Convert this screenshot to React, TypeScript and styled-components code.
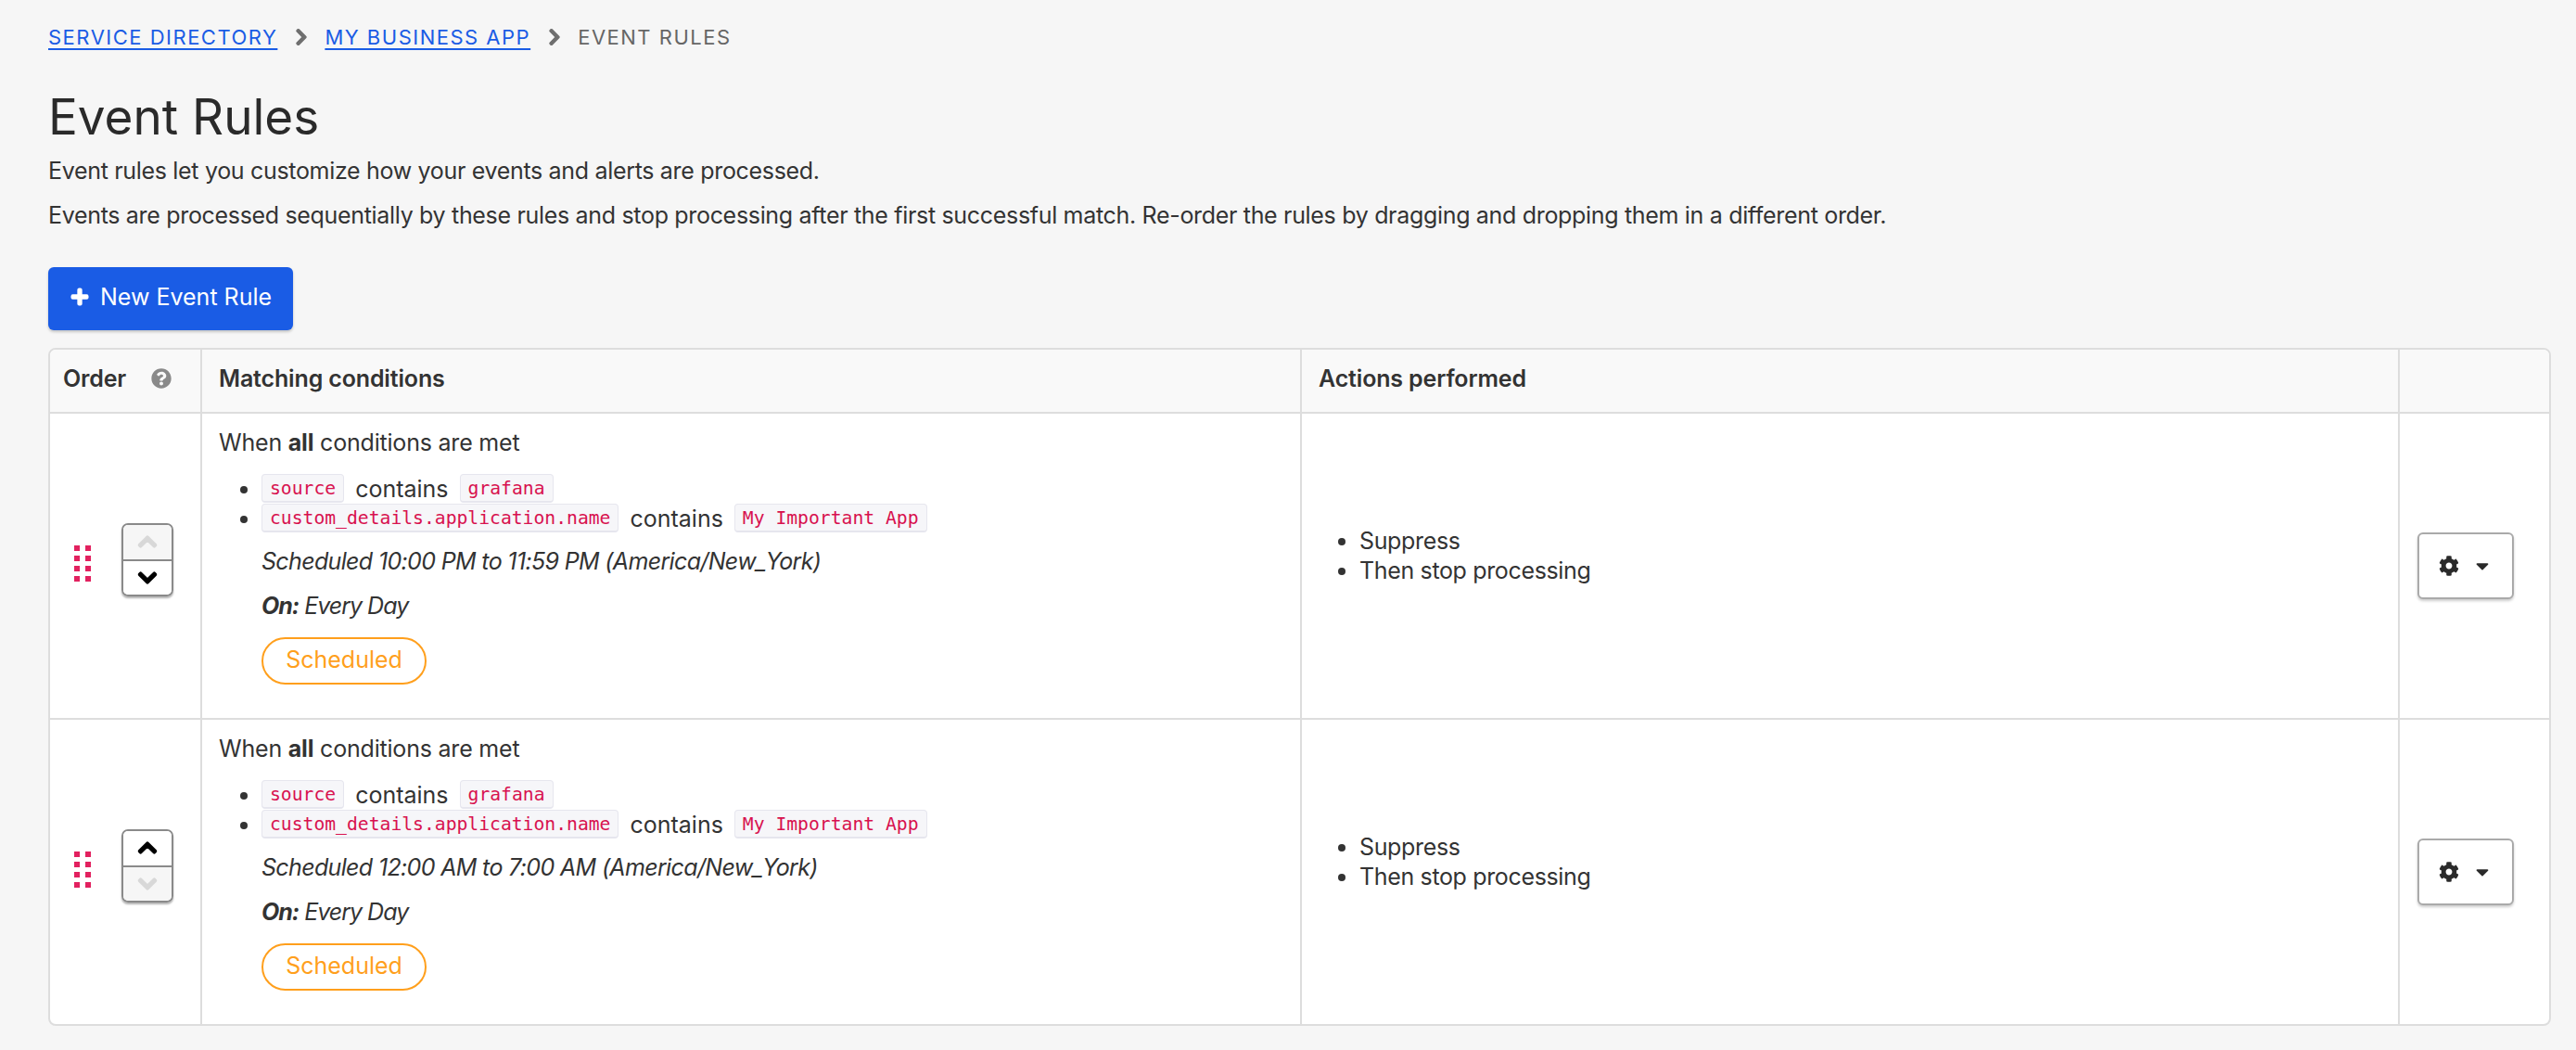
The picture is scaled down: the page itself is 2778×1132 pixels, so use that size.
import React from 'react';
import styled, { createGlobalStyle } from 'styled-components';
import { FaCaretDown, FaChevronDown, FaChevronRight, FaChevronUp, FaCog, FaPlus, FaQuestionCircle } from 'react-icons/fa';

const GlobalStyle = createGlobalStyle`
  html, body {
    margin: 0;
    background: #f6f6f6;
  }
  body {
    font-family: Inter, "Noto Sans", sans-serif;
    font-size: 25px;
    color: #333;
  }
`;

const Page = styled.div`
  width: 2778px;
  height: 1132px;
  box-sizing: border-box;
  padding: 24px 27px 0 52px;
  overflow: hidden;
`;

const Crumbs = styled.nav`
  display: flex;
  align-items: center;
  height: 32px;
  font-size: 22px;
  letter-spacing: 1.5px;
`;

const CrumbLink = styled.a`
  color: #1a5ce5;
  text-decoration: underline;
  text-underline-offset: 4px;
`;

const CrumbCurrent = styled.span`
  color: #666;
`;

const CrumbSep = styled.span`
  display: flex;
  margin: 0 15px 0 16px;
  color: #6f6f6f;
  font-size: 20px;
`;

const Title = styled.h1`
  margin: 38px 0 2px;
  font-size: 53px;
  line-height: 64px;
  font-weight: 400;
  color: #2a2a2a;
`;

const Intro = styled.p`
  margin: 0;
  height: 48px;
  line-height: 48px;
  letter-spacing: -0.32px;
`;

const NewButton = styled.button`
  display: flex;
  align-items: center;
  gap: 12px;
  margin: 32px 0 19px;
  width: 264px;
  height: 68px;
  padding: 0 0 4px 24px;
  border: 0;
  border-radius: 6px;
  background: #1a5ce5;
  color: #fff;
  font: inherit;
  box-shadow: 0 2px 3px rgba(0, 0, 0, 0.2);
`;

const Table = styled.div`
  display: grid;
  grid-template-columns: 164px 1186px 1184px 1fr;
  width: 2699px;
  box-sizing: border-box;
  border: 2px solid #ddd;
  border-radius: 8px;
  background: #fff;
  overflow: hidden;
`;

const HeadCell = styled.div<{ $last?: boolean }>`
  display: flex;
  align-items: center;
  height: 69px;
  padding: 0 18px 5px;
  box-sizing: border-box;
  background: #f9f9f9;
  border-bottom: 2px solid #ddd;
  border-right: ${(p) => (p.$last ? 0 : '2px solid #ddd')};
  font-weight: 600;
  letter-spacing: -0.15px;
`;

const OrderHead = styled(HeadCell)`
  gap: 27px;
  padding-left: 14px;
`;

const HelpIcon = styled.span`
  display: flex;
  color: #8a8a8a;
  font-size: 22px;
`;

const Cell = styled.div<{ $last?: boolean; $bottom?: boolean }>`
  height: ${(p) => (p.$bottom ? '328px' : '330px')};
  box-sizing: border-box;
  border-right: ${(p) => (p.$last ? 0 : '2px solid #ddd')};
  border-bottom: ${(p) => (p.$bottom ? 0 : '2px solid #ddd')};
`;

const OrderCell = styled(Cell)`
  display: flex;
  align-items: center;
  gap: 33px;
  padding: 0 0 6px 26px;
`;

const DragDots = styled.div`
  display: grid;
  grid-template-columns: 6px 6px;
  grid-auto-rows: 6px;
  gap: 5px 6px;
`;

const Dot = styled.i`
  background: #e2215f;
`;

const Spinner = styled.div`
  display: flex;
  flex-direction: column;
  width: 56px;
  height: 79px;
  margin-bottom: 7px;
  box-sizing: border-box;
  border: 2px solid #8a8a8a;
  border-radius: 7px;
  overflow: hidden;
  box-shadow: 0 2px 2px rgba(0, 0, 0, 0.3);
`;

const SpinnerStep = styled.div<{ $off?: boolean }>`
  flex: 1;
  display: flex;
  align-items: center;
  justify-content: center;
  background: ${(p) => (p.$off ? '#f6f6f6' : '#fff')};
  color: ${(p) => (p.$off ? '#d8d8d8' : '#000')};
  font-size: 22px;
  & + & {
    border-top: 2px solid #8a8a8a;
  }
`;

const ConditionCell = styled(Cell)`
  padding: 15px 18px 0;
`;

const Lead = styled.div`
  line-height: 32px;
  letter-spacing: -0.2px;
`;

const Conditions = styled.ul`
  margin: 18px 0 0;
  padding: 0 0 0 46px;
  line-height: 32px;
`;

const Code = styled.code`
  display: inline-block;
  box-sizing: border-box;
  height: 31px;
  padding: 0 8px;
  line-height: 30px;
  border: 1px solid #e6e6ee;
  border-bottom-width: 2px;
  border-radius: 4px;
  background: #f6f6f9;
  color: #d8124f;
  font-family: "DejaVu Sans Mono", monospace;
  font-size: 19.7px;
  vertical-align: top;
`;

const Word = styled.span`
  margin: 0 12px;
`;

const Note = styled.div`
  margin: 14px 0 0 46px;
  line-height: 32px;
  font-style: italic;
  letter-spacing: -0.65px;
`;

const DayNote = styled(Note)`
  margin-top: 16px;
  letter-spacing: -1px;
`;

const Pill = styled.div`
  display: inline-flex;
  align-items: center;
  justify-content: center;
  margin: 18px 0 0 46px;
  width: 178px;
  height: 51px;
  padding-bottom: 4px;
  box-sizing: border-box;
  border: 2px solid #ff9f1c;
  border-radius: 26px;
  color: #ff9f1c;
`;

const ActionCell = styled(Cell)`
  display: flex;
  align-items: center;
  padding-bottom: 22px;
`;

const Actions = styled.ul`
  margin: 0;
  padding: 0 0 0 62px;
  line-height: 32px;
  letter-spacing: -0.35px;
`;

const MenuCell = styled(Cell)`
  display: flex;
  align-items: center;
  justify-content: center;
  padding-right: 20px;
`;

const MenuButton = styled.button`
  display: flex;
  align-items: center;
  justify-content: center;
  gap: 14px;
  width: 104px;
  height: 72px;
  padding: 0;
  border: 2px solid #aaa;
  border-radius: 6px;
  background: #fff;
  color: #2a2a2a;
  font-size: 22px;
  box-shadow: 0 2px 3px rgba(0, 0, 0, 0.2);
`;

const rules = [
  { time: '10:00 PM to 11:59 PM', up: false, down: true },
  { time: '12:00 AM to 7:00 AM', up: true, down: false },
];

export default function App() {
  return (
    <Page>
      <GlobalStyle />
      <Crumbs>
        <CrumbLink>SERVICE DIRECTORY</CrumbLink>
        <CrumbSep><FaChevronRight strokeWidth={30} /></CrumbSep>
        <CrumbLink>MY BUSINESS APP</CrumbLink>
        <CrumbSep><FaChevronRight strokeWidth={30} /></CrumbSep>
        <CrumbCurrent>EVENT RULES</CrumbCurrent>
      </Crumbs>
      <Title>Event Rules</Title>
      <Intro>Event rules let you customize how your events and alerts are processed.</Intro>
      <Intro>Events are processed sequentially by these rules and stop processing after the first successful match. Re-order the rules by dragging and dropping them in a different order.</Intro>
      <NewButton><FaPlus size={20} strokeWidth={40} /> New Event Rule</NewButton>
      <Table>
        <OrderHead>Order <HelpIcon><FaQuestionCircle /></HelpIcon></OrderHead>
        <HeadCell>Matching conditions</HeadCell>
        <HeadCell>Actions performed</HeadCell>
        <HeadCell $last />
        {rules.map((rule, i) => {
          const isLast = i === rules.length - 1;
          return (
            <React.Fragment key={rule.time}>
              <OrderCell $bottom={isLast}>
                <DragDots>
                  {Array.from({ length: 8 }).map((_, n) => <Dot key={n} />)}
                </DragDots>
                <Spinner>
                  <SpinnerStep $off={!rule.up}><FaChevronUp strokeWidth={40} /></SpinnerStep>
                  <SpinnerStep $off={!rule.down}><FaChevronDown strokeWidth={40} /></SpinnerStep>
                </Spinner>
              </OrderCell>
              <ConditionCell $bottom={isLast}>
                <Lead>When <b>all</b> conditions are met</Lead>
                <Conditions>
                  <li><Code>source</Code><Word>contains</Word><Code>grafana</Code></li>
                  <li><Code>custom_details.application.name</Code><Word>contains</Word><Code>My Important App</Code></li>
                </Conditions>
                <Note>Scheduled {rule.time} (America/New_York)</Note>
                <DayNote><b>On:</b> Every Day</DayNote>
                <Pill>Scheduled</Pill>
              </ConditionCell>
              <ActionCell $bottom={isLast}>
                <Actions>
                  <li>Suppress</li>
                  <li>Then stop processing</li>
                </Actions>
              </ActionCell>
              <MenuCell $last $bottom={isLast}>
                <MenuButton><FaCog /><FaCaretDown /></MenuButton>
              </MenuCell>
            </React.Fragment>
          );
        })}
      </Table>
    </Page>
  );
}
